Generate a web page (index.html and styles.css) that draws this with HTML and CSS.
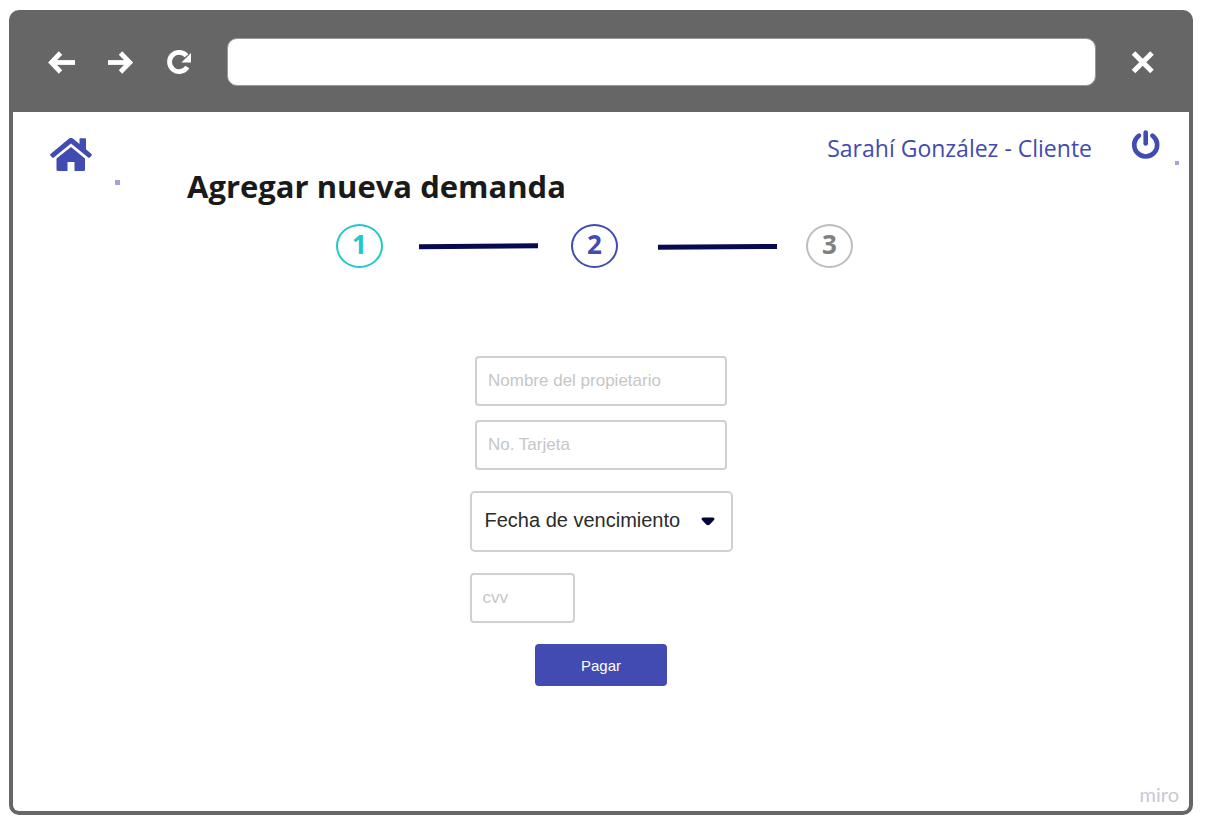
FILE: index.html
```html
<!DOCTYPE html>
<html lang="es">
<head>
<meta charset="utf-8">
<meta name="viewport" content="width=device-width, initial-scale=1">
<title>Agregar nueva demanda</title>
<link rel="stylesheet" href="styles.css">
</head>
<body>
<div class="window">
  <div class="toolbar">
    <button class="tool" type="button" aria-label="Atrás">
      <svg width="28" height="24" viewBox="0 0 28 24" fill="none" stroke="#fff" stroke-width="4.800"><path d="M28 12.500H5"/><path d="M13.500 3 4.400 12.500l9.100 9.500"/></svg>
    </button>
    <button class="tool" type="button" aria-label="Adelante">
      <svg width="28" height="24" viewBox="0 0 28 24" fill="none" stroke="#fff" stroke-width="4.800"><path d="M1 12.500h22"/><path d="M13.500 3 22.800 12.500l-9.300 9.500"/></svg>
    </button>
    <button class="tool" type="button" aria-label="Recargar">
      <svg width="28" height="24" viewBox="0 0 28 24"><path d="M20.300 17A9.600 9.600 0 1 1 19.500 5.800" fill="none" stroke="#fff" stroke-width="4.800"/><path d="M24 3v9.500h-9.500l3.700-3.700 2.600-2.600z" fill="#fff"/></svg>
    </button>
    <input class="address" type="text" aria-label="Dirección">
    <button class="tool" type="button" aria-label="Cerrar">
      <svg width="28" height="24" viewBox="0 0 28 24" fill="none" stroke="#fff" stroke-width="5"><path d="m5.500 3 18.500 18.500M24 3 5.500 21.500"/></svg>
    </button>
  </div>
  <main class="page">
    <header class="header">
      <a class="home" href="#" aria-label="Inicio">
        <svg width="42" height="34" viewBox="0 0 42 34" fill="#414bb2"><path d="M21 9 35 20.500V31.500a1.500 1.500 0 0 1-1.500 1.500H24.500v-9h-7v9H8A1.500 1.500 0 0 1 6.500 31.500V20.500z"/><path d="M18.800.8a3.500 3.500 0 0 1 4.400 0L29.500 6V1.200q0-1 1-1H35q1 0 1 1V11.300l5.500 4.700q.8.700.1 1.500l-1.800 2q-.8.800-1.600.1L21 5.500 3.800 19.600q-.8.700-1.600-.1L.4 17.500q-.7-.8.100-1.500z"/></svg>
      </a>
      <span class="dot"></span>
      <h1 class="title">Agregar nueva demanda</h1>
      <span class="user">Sarahí González - Cliente</span>
      <button class="power" type="button" aria-label="Cerrar sesión">
        <svg width="30" height="30" viewBox="0 0 30 30" fill="none" stroke="#414bb2" stroke-width="4.600" stroke-linecap="round"><path d="M14.700 2.500v11"/><path d="M8 5.600a11.500 11.500 0 1 0 13.400 0"/></svg>
      </button>
      <span class="dot dot-small"></span>
    </header>

    <ol class="steps">
      <li class="step step-done">1</li>
      <li class="link" aria-hidden="true"><svg width="188" height="10" viewBox="0 0 188 10"><path d="M36 5.700 155 4.800" stroke="#070a50" stroke-width="5"/></svg></li>
      <li class="step step-current" aria-current="step">2</li>
      <li class="link" aria-hidden="true"><svg width="188" height="10" viewBox="0 0 188 10"><path d="M40 6.300 159 5.400" stroke="#070a50" stroke-width="5"/></svg></li>
      <li class="step">3</li>
    </ol>

    <form class="form">
      <div class="fields">
        <input class="field" type="text" placeholder="Nombre del propietario" aria-label="Nombre del propietario">
        <input class="field" type="text" placeholder="No. Tarjeta" aria-label="No. Tarjeta">
      </div>
      <div class="select-box">
        <select class="select" aria-label="Fecha de vencimiento">
          <option>Fecha de vencimiento</option>
        </select>
        <svg class="caret" width="14" height="9" viewBox="0 0 14 9" fill="#04043c"><path d="M2 .5h10q2.300.5 1 2.500L8.800 7.500q-1.800 1.600-3.600 0L1 3Q-.3 1 2 .5z"/></svg>
      </div>
      <input class="field field-cvv" type="text" placeholder="cvv" aria-label="cvv">
      <button class="pay" type="submit">Pagar</button>
    </form>

    <footer class="brand">miro</footer>
  </main>
</div>
</body>
</html>
```
FILE: styles.css
```css
* {
  box-sizing: border-box;
}

body {
  margin: 0;
  min-height: 100vh;
  padding: 10px 13px 13px 9px;
  display: flex;
  background: #fff;
  font-family: "Liberation Sans", Arial, sans-serif;
}

button {
  border: 0;
  padding: 0;
  background: none;
  cursor: pointer;
}

svg {
  display: block;
}

.window {
  flex: 1;
  display: flex;
  flex-direction: column;
  border: 4px solid #666;
  border-radius: 10px;
  background: #666;
}

.toolbar {
  display: flex;
  align-items: center;
  gap: 32px;
  padding: 24px 33px 26px 34px;
}

.address {
  flex: 1;
  min-width: 0;
  height: 48px;
  border: 1px solid #999;
  border-radius: 10px;
  padding: 0 12px;
  background: #fff;
  font-size: 16px;
}

.page {
  flex: 1;
  display: flex;
  flex-direction: column;
  border-radius: 0 0 6px 6px;
  background: #fff;
}

.header {
  display: flex;
  align-items: flex-start;
  padding: 18px 10px 0 37px;
}

.home {
  margin-top: 8px;
}

.dot {
  width: 5px;
  height: 5px;
  margin: 50px 67px 0 23px;
  background: #a3a5d6;
}

.dot-small {
  width: 4px;
  height: 4px;
  margin: 31px 0 0 14px;
}

.title {
  margin: 36px auto 0 0;
  font: 700 31px/40px "Open Sans", sans-serif;
  color: #1a1a1a;
}

.user {
  margin: 3px 39px 0 0;
  font: 400 23px/30px "Open Sans", sans-serif;
  color: #414bb2;
}

.steps {
  display: flex;
  justify-content: center;
  align-items: center;
  margin: 18px 13px 0 0;
  padding: 0;
  list-style: none;
}

.step {
  width: 47px;
  height: 44px;
  border: 2px solid #bdbdbd;
  border-radius: 50%;
  font: 700 26px/36px "Open Sans", sans-serif;
  text-align: center;
  color: #808080;
}

.step-done {
  border-color: #22c7cb;
  color: #22c7cb;
}

.step-current {
  border-color: #414bb2;
  color: #414bb2;
}

.form {
  display: flex;
  flex-direction: column;
  align-items: center;
  gap: 21px;
  width: 263px;
  margin: 88px auto 0;
}

.fields {
  display: flex;
  flex-direction: column;
  gap: 14px;
}

.field {
  width: 252px;
  height: 50px;
  border: 2px solid #d0d0d0;
  border-radius: 4px;
  padding: 0 11px;
  background: #fff;
  font: 17px "Liberation Sans", Arial, sans-serif;
  color: #1a1a1a;
}

.field::placeholder {
  color: #c6c6c6;
  opacity: 1;
}

.field-cvv {
  width: 105px;
  align-self: flex-start;
}

.select-box {
  position: relative;
  width: 100%;
}

.select {
  display: block;
  width: 100%;
  height: 61px;
  border: 2px solid #d0d0d0;
  border-radius: 5px;
  padding: 0 40px 4px 13px;
  appearance: none;
  background: #fff;
  font: 20px "Liberation Sans", Arial, sans-serif;
  color: #2b2b2b;
}

.caret {
  position: absolute;
  top: 26px;
  right: 18px;
  pointer-events: none;
}

.pay {
  width: 132px;
  height: 42px;
  border-radius: 4px;
  background: #414bb2;
  font: 15px "Liberation Sans", Arial, sans-serif;
  color: #fff;
}

.brand {
  margin: auto 10px 4px auto;
  font: 400 20px/26px Lato, sans-serif;
  color: #c9c9d2;
}
```
